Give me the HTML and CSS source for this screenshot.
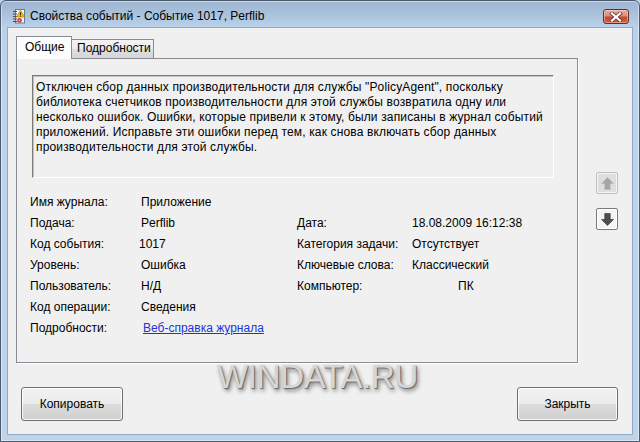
FILE: index.html
```html
<!DOCTYPE html>
<html lang="ru">
<head>
<meta charset="utf-8">
<title>Свойства событий</title>
<link rel="stylesheet" href="styles.css">
</head>
<body>
<div class="window">
  <div class="titlebar">
    <svg class="app-icon" width="14" height="15" viewBox="0 0 14 15">
      <rect x="3.5" y="0.5" width="9" height="13.5" fill="#f4f6fa" stroke="#6b7c98"/>
      <path d="M1 2.5h4M1 5h4M1 7.5h4M1 10h4M1 12.5h4" stroke="#4a4f5a" stroke-width="1"/>
      <path d="M8.5 1.2 L12.6 8 H4.4 Z" fill="#f6c800" stroke="#9a7400" stroke-width="0.6"/>
      <path d="M8.5 3.4v2.4M8.5 6.5v0.9" stroke="#111" stroke-width="1.1"/>
      <circle cx="7.5" cy="11.3" r="2.4" fill="#d3342c"/>
      <circle cx="7.5" cy="11.3" r="0.9" fill="#f3b0a8"/>
    </svg>
    <span class="title">Свойства событий - Событие 1017, Perflib</span>
    <div class="close-btn">
      <svg width="14" height="10" viewBox="0 0 14 10">
        <path d="M3 1.5 L11 8.5 M11 1.5 L3 8.5" stroke="#6b3b36" stroke-width="3.8" stroke-linecap="square"/>
        <path d="M3 1.5 L11 8.5 M11 1.5 L3 8.5" stroke="#ffffff" stroke-width="2.2" stroke-linecap="square"/>
      </svg>
    </div>
  </div>
  <div class="client">
    <div class="main-row">
      <div class="tabset">
        <div class="tabs">
          <div class="tab tab-active">Общие</div>
          <div class="tab">Подробности</div>
        </div>
        <div class="panel">
          <div class="desc">Отключен сбор данных производительности для службы "PolicyAgent", поскольку<br>библиотека счетчиков производительности для этой службы возвратила одну или<br>несколько ошибок. Ошибки, которые привели к этому, были записаны в журнал событий<br>приложений. Исправьте эти ошибки перед тем, как снова включать сбор данных<br>производительности для этой службы.</div>
          <div class="fields">
            <div class="grid grid-left">
              <span>Имя журнала:</span><span>Приложение</span>
              <span>Подача:</span><span>Perflib</span>
              <span>Код события:</span><span class="num">1017</span>
              <span>Уровень:</span><span>Ошибка</span>
              <span>Пользователь:</span><span>Н/Д</span>
              <span>Код операции:</span><span>Сведения</span>
              <span>Подробности:</span><span><a class="link" href="#">Веб-справка журнала</a></span>
            </div>
            <div class="grid grid-right">
              <span>Дата:</span><span>18.08.2009 16:12:38</span>
              <span>Категория задачи:</span><span>Отсутствует</span>
              <span>Ключевые слова:</span><span>Классический</span>
              <span>Компьютер:</span><span class="pc">ПК</span>
            </div>
          </div>
        </div>
      </div>
      <div class="side">
        <div class="arrow-btn disabled">
          <svg width="13" height="13" viewBox="0 0 12 12"><path d="M6 0.5 L11.5 6 H8.5 V11.5 H3.5 V6 H0.5 Z" fill="#a4a4a4" stroke="#b8b8b8" stroke-width="0.6"/></svg>
        </div>
        <div class="arrow-btn">
          <svg width="13" height="13" viewBox="0 0 12 12"><path d="M6 11.5 L11.5 6 H8.5 V0.5 H3.5 V6 H0.5 Z" fill="#4f4f4f" stroke="#333" stroke-width="0.6"/></svg>
        </div>
      </div>
    </div>
    <div class="buttons">
      <button class="btn btn-copy">Копировать</button>
      <button class="btn btn-close">Закрыть</button>
    </div>
  </div>
  <div class="watermark">WINDATA.RU</div>
</div>
</body>
</html>
```
FILE: styles.css
```css
* { box-sizing: border-box; }
html, body { margin: 0; padding: 0; }
body {
  width: 640px;
  height: 442px;
  overflow: hidden;
  font-family: "Liberation Sans", Arial, sans-serif;
  font-size: 12px;
  color: #000;
  background: #bcd3ea;
}
.window {
  position: relative;
  width: 640px;
  height: 442px;
  border: 1px solid #4d5b6c;
  border-radius: 6px 6px 0 0;
  background: linear-gradient(#9fb6d2 0px, #a9c0db 12px, #bad1ea 26px, #bdd4eb 60px, #bdd4eb 100%);
  box-shadow: inset 0 0 0 1px rgba(255,255,255,0.45);
  padding: 0 6px;
}
.titlebar {
  height: 26px;
  display: flex;
  align-items: center;
  padding: 5px 0 0 5px;
}
.app-icon { flex: none; margin-right: 4px; }
.title { line-height: 15px; }
.close-btn {
  margin-left: auto;
  margin-right: 4px;
  width: 26px;
  height: 15px;
  border: 1px solid #6e2a20;
  border-radius: 3px;
  background: linear-gradient(#e9b2a5 0%, #dc8b79 45%, #c54a31 55%, #cf5f43 100%);
  box-shadow: inset 0 0 0 1px rgba(255,220,210,0.45);
  display: flex;
  align-items: center;
  justify-content: center;
}
.client {
  height: 408px;
  border: 1px solid #93a8c2;
  background: #f0f0f0;
  padding: 8px 14px 13px 8px;
  display: flex;
  flex-direction: column;
}
.main-row { display: flex; }
.tabset { width: 562px; }
.tabs {
  display: flex;
  align-items: flex-end;
  height: 22px;
}
.tab {
  height: 19px;
  line-height: 17px;
  padding: 0 5px;
  border: 1px solid #898c95;
  border-bottom: none;
  border-left: none;
  background: linear-gradient(#f3f3f3, #ebebeb 50%, #dedede 50%, #d6d6d6);
  width: 82px;
}
.tab-active {
  width: 56px;
  height: 23px;
  margin-bottom: -1px;
  border-left: 1px solid #898c95;
  background: #fcfcfc;
  line-height: 20px;
  padding: 0 8px;
  position: relative;
  z-index: 1;
}
.panel {
  height: 305px;
  border: 1px solid #898c95;
  box-shadow: 1px 1px 0 #ffffff;
  background: #f0f0f0;
  padding: 16px 23px 0 15px;
}
.desc {
  height: 103px;
  border-top: 1px solid #7a7a7a;
  border-left: 1px solid #7a7a7a;
  border-right: 1px solid #ffffff;
  border-bottom: 1px solid #ffffff;
  box-shadow: inset 1px 1px 0 #c4c4c4;
  padding: 4px 3px;
  line-height: 15px;
  letter-spacing: 0.15px;
  white-space: nowrap;
  overflow: hidden;
}
.fields {
  display: flex;
  margin: 14px 0 0 -2px;
}
.grid {
  display: grid;
  grid-auto-rows: 21px;
  align-items: center;
  line-height: 15px;
  white-space: nowrap;
}
.grid-left { grid-template-columns: 111px 156px; }
.grid-right { grid-template-columns: 115px auto; margin-top: 21px; }
.num { margin-left: -2px; }
.pc { padding-left: 46px; }
.link { color: #1a35d6; text-decoration: underline; margin-left: 2px; }
.side {
  margin-left: 18px;
  padding-top: 136px;
  display: flex;
  flex-direction: column;
  gap: 14px;
}
.arrow-btn {
  width: 22px;
  height: 22px;
  border: 1px solid #7a7a7a;
  border-radius: 2px;
  background: #f4f4f4;
  box-shadow: inset 0 0 0 1px #ffffff;
  display: flex;
  align-items: center;
  justify-content: center;
}
.arrow-btn.disabled {
  border-color: #c0c0c0;
  background: #dedede;
  box-shadow: inset 0 0 0 1px #f4f4f4;
}
.buttons {
  margin-top: 24px;
  display: flex;
  justify-content: space-between;
  padding-left: 5px;
}
.btn {
  height: 34px;
  border: 1px solid #707070;
  border-radius: 3px;
  background: linear-gradient(#f2f2f2 0%, #ebebeb 50%, #dddddd 50%, #cfcfcf 100%);
  box-shadow: inset 0 0 0 1px rgba(255,255,255,0.8);
  font-family: inherit;
  font-size: 12px;
  color: #000;
  padding: 0;
}
.btn-copy { width: 102px; }
.btn-close { width: 101px; }
.watermark {
  position: absolute;
  left: 216px;
  top: 359px;
  font-family: "Liberation Sans", Arial, sans-serif;
  font-size: 33px;
  line-height: 33px;
  color: #d6d6d6;
  text-shadow: 1px 1px 1px #666666, 2px 3px 4px rgba(0,0,0,0.5);
  letter-spacing: -0.3px;
  pointer-events: none;
}
```
